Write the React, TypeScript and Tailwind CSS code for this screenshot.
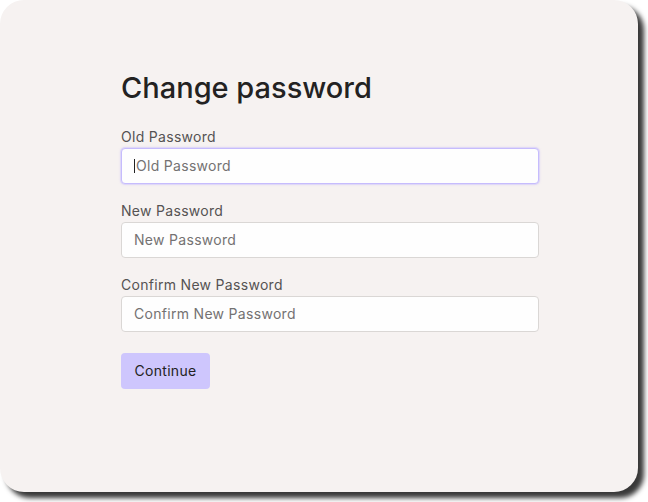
import React from "react";

const font = { fontFamily: "Inter, 'Noto Sans', sans-serif" };

function Field({ label, focused }: { label: string; focused?: boolean }) {
  return (
    <div className="flex flex-col gap-[1px]">
      <label className="pt-[1px] text-[14px] leading-[20px] tracking-[0.3px] text-[#555353]">{label}</label>
      <div
        className={
          "flex h-[36px] w-[418px] items-center rounded-[4px] border bg-[#fefefe] pb-[2px] pl-[12px] text-[14px] tracking-[0.3px] text-[#747272] " +
          (focused
            ? "border-[#c6bcfd] shadow-[0_0_0_1px_rgba(200,190,255,0.35),0_0_3px_rgba(180,165,255,0.45)]"
            : "border-[#dad7d5]")
        }
      >
        {focused && <span className="mr-px mt-[2px] h-[14px] w-px bg-[#222]" />}
        <span>{label}</span>
      </div>
    </div>
  );
}

export default function App() {
  return (
    <div className="h-[502px] w-[648px] bg-white" style={font}>
      <div className="h-[492px] w-[638px] rounded-[24px] bg-[#f6f2f1] shadow-[6px_6px_5px_rgba(0,0,0,0.78)]">
        <div className="flex flex-col pl-[121px] pt-[70px]">
          <h1 className="text-[29px] font-medium leading-[36px] text-[#232222]">Change password</h1>
          <div className="mt-[20px] flex flex-col gap-[16px]">
            <Field label="Old Password" focused />
            <Field label="New Password" />
            <Field label="Confirm New Password" />
          </div>
          <button className="mt-[21px] h-[36px] w-[89px] rounded-[4px] bg-[#cec6fd] pb-[2px] text-[14px] tracking-[0.3px] text-[#232222]">
            Continue
          </button>
        </div>
      </div>
    </div>
  );
}
